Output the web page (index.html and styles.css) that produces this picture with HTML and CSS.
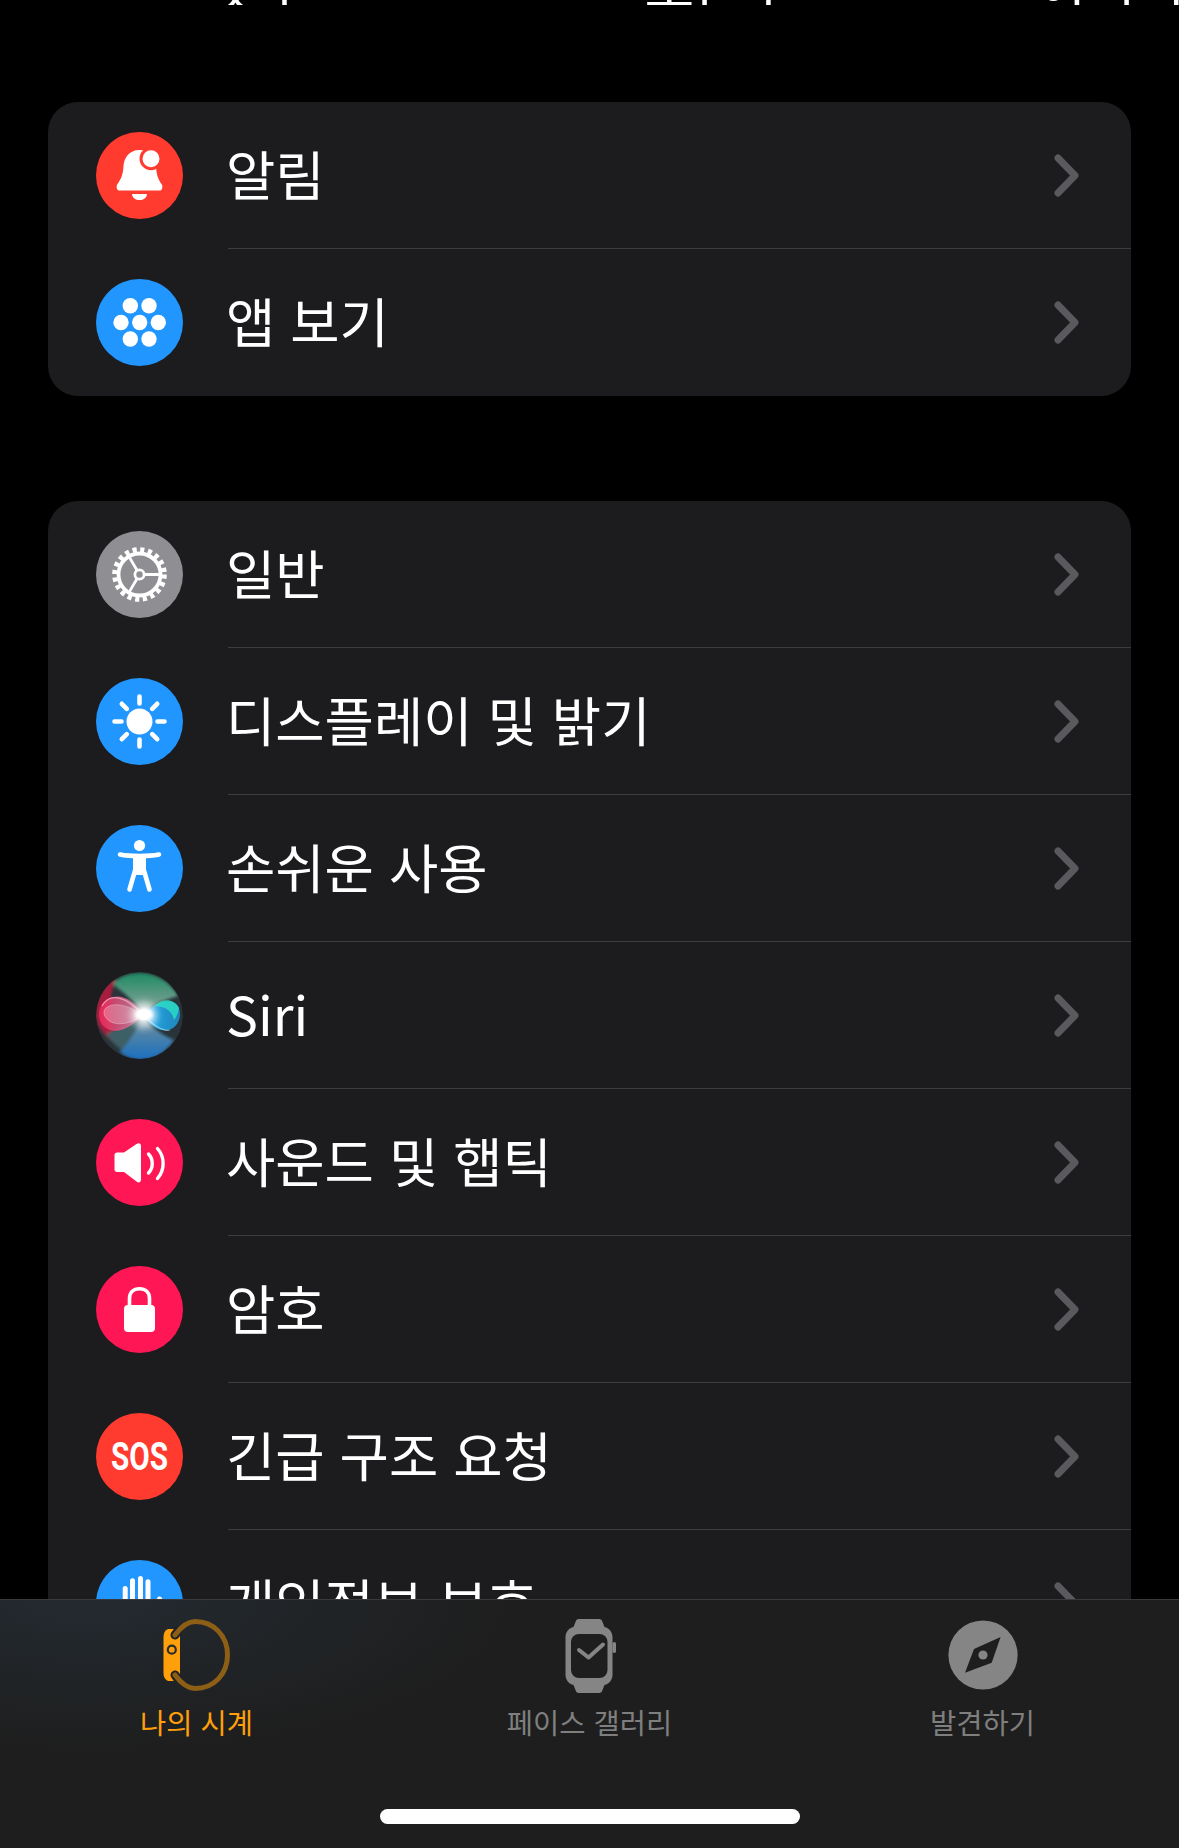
FILE: index.html
```html
<!DOCTYPE html>
<html lang="ko">
<head>
    <meta charset="UTF-8">
    <meta name="viewport" content="width=device-width, initial-scale=1.0">
    <title>나의 시계</title>
    <link rel="stylesheet" href="styles.css">
</head>
<body>
    <div class="screen">
        <div class="content">
            <div class="clipped-row">
                <span class="clipped-a">맞추</span>
                <span class="clipped-b">모든수</span>
                <span class="clipped-c">이러리</span>
            </div>

            <div class="card card-first">
                <div class="row">
                    <svg class="icon" viewBox="0 0 87 87">
                        <circle cx="43.5" cy="43.5" r="43.5" fill="#ff3b30"/>
                        <path fill="#fff" d="M43.5 18C33 18 28 26 27.5 34C27 43 25 47 21.5 52C20 54 20.5 58.5 23 58.5H64C66.5 58.5 67 54 65.5 52C62 47 60.5 43 60 34C59.5 26 54 18 43.5 18Z"/>
                        <path fill="#fff" d="M36 62H51C50.5 66 47.5 68 43.5 68C39.5 68 36.5 66 36 62Z"/>
                        <circle cx="55" cy="26.7" r="11.5" fill="#ff3b30"/>
                        <circle cx="55" cy="26.7" r="8.5" fill="#fff"/>
                    </svg>
                    <span class="label">알림</span>
                    <svg class="chevron" viewBox="0 0 30 46"><path d="M5 5L22 22.5L5 40"/></svg>
                </div>
                <div class="row">
                    <svg class="icon" viewBox="0 0 87 87">
                        <circle cx="43.5" cy="43.5" r="43.5" fill="#2196ff"/>
                        <g fill="#fff">
                            <circle cx="34.3" cy="26.7" r="7.7"/><circle cx="53" cy="26.7" r="7.7"/>
                            <circle cx="25" cy="43.5" r="7.7"/><circle cx="43.7" cy="43.5" r="7.7"/><circle cx="62.3" cy="43.5" r="7.7"/>
                            <circle cx="34.3" cy="60" r="7.7"/><circle cx="53" cy="60" r="7.7"/>
                        </g>
                    </svg>
                    <span class="label">앱 보기</span>
                    <svg class="chevron" viewBox="0 0 30 46"><path d="M5 5L22 22.5L5 40"/></svg>
                </div>
            </div>

            <div class="card">
                <div class="row">
                    <svg class="icon" viewBox="0 0 87 87">
                        <circle cx="43.5" cy="43.5" r="43.5" fill="#8e8e93"/>
                        <g fill="none" stroke="#fff">
                            <circle cx="43.5" cy="43.5" r="24.8" stroke-width="5" stroke-dasharray="4.2 3.59"/>
                            <circle cx="43.5" cy="43.5" r="21" stroke-width="3.8"/>
                            <circle cx="43.5" cy="43.5" r="4.6" stroke-width="2.8"/>
                            <path stroke-width="2.8" d="M48.5 43.5H64M41 39.2L33 25.6M41 47.8L33 61.4"/>
                        </g>
                    </svg>
                    <span class="label">일반</span>
                    <svg class="chevron" viewBox="0 0 30 46"><path d="M5 5L22 22.5L5 40"/></svg>
                </div>
                <div class="row">
                    <svg class="icon" viewBox="0 0 87 87">
                        <circle cx="43.5" cy="43.5" r="43.5" fill="#2196ff"/>
                        <circle cx="43.5" cy="43.5" r="13" fill="#fff"/>
                        <path fill="none" stroke="#fff" stroke-width="4.6" stroke-linecap="round" d="M43.5 18.5V25.5M43.5 61.5V68.5M18.5 43.5H25.5M61.5 43.5H68.5M25.8 25.8L30.8 30.8M56.2 56.2L61.2 61.2M25.8 61.2L30.8 56.2M56.2 30.8L61.2 25.8"/>
                    </svg>
                    <span class="label">디스플레이 및 밝기</span>
                    <svg class="chevron" viewBox="0 0 30 46"><path d="M5 5L22 22.5L5 40"/></svg>
                </div>
                <div class="row">
                    <svg class="icon" viewBox="0 0 87 87">
                        <circle cx="43.5" cy="43.5" r="43.5" fill="#2196ff"/>
                        <circle cx="43.5" cy="20.5" r="5.6" fill="#fff"/>
                        <path fill="#fff" d="M37 31.5H50V46L47 50H40L37 46Z"/>
                        <path fill="none" stroke="#fff" stroke-width="4.6" stroke-linecap="round" d="M24 29.5C34 31.5 53 31.5 63 29.5M39.5 44L33.5 64.5M47.5 44L53.5 64.5"/>
                    </svg>
                    <span class="label">손쉬운 사용</span>
                    <svg class="chevron" viewBox="0 0 30 46"><path d="M5 5L22 22.5L5 40"/></svg>
                </div>
                <div class="row">
                    <svg class="icon" viewBox="0 0 87 87">
                        <defs>
                            <clipPath id="siri-clip"><circle cx="43.5" cy="43.5" r="43.5"/></clipPath>
                            <filter id="siri-blur" x="-30%" y="-30%" width="160%" height="160%"><feGaussianBlur stdDeviation="1.6"/></filter>
                            <filter id="siri-glow" x="-100%" y="-100%" width="300%" height="300%"><feGaussianBlur stdDeviation="3.5"/></filter>
                            <linearGradient id="siri-green" x1="0" y1="0" x2="0" y2="1">
                                <stop offset="0" stop-color="#1f8a63"/>
                                <stop offset="1" stop-color="#8fa6a0"/>
                            </linearGradient>
                            <linearGradient id="siri-blue" x1="0" y1="1" x2="0" y2="0">
                                <stop offset="0" stop-color="#1a6fc0"/>
                                <stop offset="1" stop-color="#6f8f98"/>
                            </linearGradient>
                            <linearGradient id="siri-pink" x1="0" y1="0" x2="1" y2="0">
                                <stop offset="0" stop-color="#f02a5c"/>
                                <stop offset="1" stop-color="#c98aa8"/>
                            </linearGradient>
                            <linearGradient id="siri-cyan" x1="0" y1="0" x2="1" y2="0">
                                <stop offset="0" stop-color="#1fb7ff"/>
                                <stop offset="1" stop-color="#1f8fc8"/>
                            </linearGradient>
                        </defs>
                        <g clip-path="url(#siri-clip)">
                            <circle cx="43.5" cy="43.5" r="43.5" fill="#28343a"/>
                            <g filter="url(#siri-blur)">
                                <path fill="url(#siri-green)" d="M16 12C32 -4 66 -4 82 24C66 28 54 36 48 42C38 30 28 20 16 12Z"/>
                                <path fill="#a81f3c" d="M0 42C0 26 6 14 20 5C14 22 10 46 22 74C8 64 0 54 0 42Z"/>
                                <path fill="url(#siri-blue)" d="M24 80C30 64 40 52 48 46C56 56 68 64 78 68C62 92 38 92 24 80Z"/>
                                <path fill="#3d5f66" d="M10 62C20 58 36 50 47 44C42 56 34 68 26 78C20 74 14 68 10 62Z"/>
                            </g>
                            <path fill="url(#siri-pink)" fill-opacity=".85" d="M4 36C10 22 26 22 36 30C42 34 46 40 47 43C38 52 26 62 14 58C5 55 1 46 4 36Z"/>
                            <path fill="#f4c4d4" fill-opacity=".35" stroke="#fff" stroke-opacity=".3" d="M10 36C20 28 36 36 47 43C38 50 22 56 12 48C7 44 7 38 10 36Z"/>
                            <path fill="none" stroke="#f7b6cc" stroke-opacity=".7" stroke-width="1.4" d="M6 34C14 20 30 24 47 43"/>
                            <path fill="url(#siri-cyan)" fill-opacity=".9" d="M47 43C56 32 74 24 82 34C87 44 82 56 72 58C60 60 52 50 47 43Z"/>
                            <path fill="#2de0c4" fill-opacity=".8" d="M58 34C66 26 78 26 83 36C82 42 80 46 78 48C76 38 68 34 58 34Z"/>
                            <path fill="none" stroke="#c8f5ff" stroke-opacity=".55" stroke-width="1.2" d="M47 43C56 52 66 60 74 58"/>
                            <circle cx="48" cy="43" r="13" fill="#fff" fill-opacity=".7" filter="url(#siri-glow)"/>
                            <ellipse cx="48" cy="42.5" rx="9" ry="6.5" fill="#fff" filter="url(#siri-blur)"/>
                            <circle cx="48" cy="42.5" r="5.5" fill="#fff"/>
                        </g>
                    </svg>
                    <span class="label">Siri</span>
                    <svg class="chevron" viewBox="0 0 30 46"><path d="M5 5L22 22.5L5 40"/></svg>
                </div>
                <div class="row">
                    <svg class="icon" viewBox="0 0 87 87">
                        <circle cx="43.5" cy="43.5" r="43.5" fill="#ff1654"/>
                        <path fill="#fff" d="M18.5 36C18.5 34.5 19.5 33.5 21 33.5H28L40.5 25C43 23.5 45 24.5 45 27V60.5C45 63 43 64.5 40.5 62.5L28 53H21C19.5 53 18.5 52 18.5 50.5Z"/>
                        <path fill="none" stroke="#fff" stroke-width="3.4" stroke-linecap="round" d="M52.5 35C57.5 40 57.5 49 52.5 54M61.5 29.5C69 38 69 51 61.5 59.5"/>
                    </svg>
                    <span class="label">사운드 및 햅틱</span>
                    <svg class="chevron" viewBox="0 0 30 46"><path d="M5 5L22 22.5L5 40"/></svg>
                </div>
                <div class="row">
                    <svg class="icon" viewBox="0 0 87 87">
                        <circle cx="43.5" cy="43.5" r="43.5" fill="#ff1654"/>
                        <rect x="28" y="39" width="31" height="27" rx="4" fill="#fff"/>
                        <path fill="none" stroke="#fff" stroke-width="3.6" d="M33.5 41V32.5C33.5 26.5 37.5 22.8 43.5 22.8C49.5 22.8 53.5 26.5 53.5 32.5V41"/>
                    </svg>
                    <span class="label">암호</span>
                    <svg class="chevron" viewBox="0 0 30 46"><path d="M5 5L22 22.5L5 40"/></svg>
                </div>
                <div class="row">
                    <svg class="icon" viewBox="0 0 87 87">
                        <circle cx="43.5" cy="43.5" r="43.5" fill="#ff3b30"/>
                        <text class="sos" x="15" y="57" textLength="57" lengthAdjust="spacingAndGlyphs">SOS</text>
                    </svg>
                    <span class="label">긴급 구조 요청</span>
                    <svg class="chevron" viewBox="0 0 30 46"><path d="M5 5L22 22.5L5 40"/></svg>
                </div>
                <div class="row">
                    <svg class="icon" viewBox="0 0 87 87">
                        <circle cx="43.5" cy="43.5" r="43.5" fill="#2196ff"/>
                        <path fill="none" stroke="#fff" stroke-width="5" stroke-linecap="round" d="M29.2 28.5V62M36.5 20.8V60M44.5 18.5V60M52 21.8V60M63.5 39L57 52"/>
                    </svg>
                    <span class="label">개인정보 보호</span>
                    <svg class="chevron" viewBox="0 0 30 46"><path d="M5 5L22 22.5L5 40"/></svg>
                </div>
            </div>
        </div>

        <div class="tabbar">
            <div class="tab tab-active">
                <svg class="tab-icon" viewBox="0 0 80 80">
                    <path fill="#ff9f0a" d="M11 14H23V66H11Q6.5 64 6.5 58V22Q6.5 16 11 14Z"/>
                    <path fill="none" stroke="#1e2226" stroke-width="9" stroke-linecap="round" d="M18 20L21 16M18 60L21 64"/>
                    <path fill="none" stroke="#8c5e16" stroke-width="5" stroke-linecap="round" d="M18 20C24 12 31 6.5 38 6.5C57 6.5 70.5 21 70.5 40C70.5 59 57 73.5 38 73.5C31 73.5 24 68 18 60"/>
                    <circle cx="14.8" cy="34.7" r="4" fill="none" stroke="#2a2a2a" stroke-width="2.2"/>
                </svg>
                <span class="tab-label">나의 시계</span>
            </div>
            <div class="tab">
                <svg class="tab-icon" viewBox="0 0 80 80">
                    <path fill="#858585" d="M29 4H49C51 4 52 5 52.5 7L54.5 12C59 13 62.5 17 62.5 22V60C62.5 65 59 69 54.5 70L52.5 75C52 77 51 78 49 78H29C27 78 26 77 25.5 75L23.5 70C19 69 15.5 65 15.5 60V22C15.5 17 19 13 23.5 12L25.5 7C26 5 27 4 29 4Z"/>
                    <rect x="62.5" y="27" width="3.5" height="11" rx="1.7" fill="#858585"/>
                    <rect x="21" y="19" width="36.5" height="44" rx="8" fill="#1e1e1e"/>
                    <path fill="none" stroke="#858585" stroke-width="4" stroke-linecap="round" stroke-linejoin="round" d="M29 35L38.5 42.5L53 29.5"/>
                </svg>
                <span class="tab-label">페이스 갤러리</span>
            </div>
            <div class="tab">
                <svg class="tab-icon" viewBox="0 0 80 80">
                    <circle cx="40" cy="40" r="34.6" fill="#858585"/>
                    <path fill="#1e1e1e" d="M57.6 22L48.7 47.7L22 57.7L31 34Z"/>
                    <circle cx="40" cy="40" r="4.6" fill="#858585"/>
                </svg>
                <span class="tab-label">발견하기</span>
            </div>
            <div class="home-indicator"></div>
        </div>
    </div>
</body>
</html>
```

FILE: styles.css
```css
* {
    box-sizing: border-box;
}

body {
    margin: 0;
    background-color: #000;
    font-family: "Noto Sans CJK KR", "Noto Sans", sans-serif;
    color: #fff;
}

.screen {
    width: 1179px;
    height: 1848px;
    display: flex;
    flex-direction: column;
    overflow: hidden;
}

.content {
    flex: 1;
    min-height: 0;
    overflow: hidden;
}

.clipped-row {
    height: 5px;
    display: flex;
    align-items: flex-end;
    overflow: hidden;
    font-size: 54px;
    line-height: 1;
    white-space: nowrap;
}

.clipped-row span {
    display: block;
    height: 54px;
    margin-bottom: -7px;
    flex: none;
}

.clipped-a {
    margin-left: 210px;
}

.clipped-b {
    margin-left: 335px;
}

.clipped-c {
    margin-left: 243px;
}

.card {
    margin: 0 48px;
    margin-top: 105px;
    background-color: #1c1c1e;
    border-radius: 30px;
}

.card-first {
    margin-top: 97px;
}

.row {
    position: relative;
    height: 147px;
    display: flex;
    align-items: center;
    padding: 0 52px 0 48px;
}

.row::after {
    content: "";
    position: absolute;
    left: 180px;
    right: 0;
    bottom: 0;
    height: 1px;
    background-color: #3d3d40;
}

.row:last-child::after {
    display: none;
}

.icon {
    width: 87px;
    height: 87px;
    flex: none;
    margin-right: 43px;
}

.sos {
    font-family: Roboto, sans-serif;
    font-weight: 700;
    font-size: 38px;
    fill: #fff;
}

.label {
    flex: 1;
    font-size: 53.6px;
    line-height: 1.2;
    padding-bottom: 5px;
    white-space: nowrap;
}

.chevron {
    width: 30px;
    height: 46px;
    flex: none;
    margin-right: -4px;
    fill: none;
    stroke: #5a5a5e;
    stroke-width: 7;
    stroke-linecap: round;
    stroke-linejoin: round;
}

.tabbar {
    position: relative;
    height: 249px;
    flex: none;
    display: flex;
    align-items: flex-start;
    border-top: 1px solid #3a3a3c;
    background: radial-gradient(ellipse 420px 150px at 90px 0, #232a30, #1e1e1e 100%);
}

.tab {
    width: 393px;
    display: flex;
    flex-direction: column;
    align-items: center;
    padding-top: 15px;
    color: #7f7f7f;
}

.tab-active {
    color: #ff9f0a;
}

.tab-icon {
    width: 80px;
    height: 80px;
}

.tab-label {
    font-size: 28.5px;
    line-height: 34px;
    margin-top: 10px;
    white-space: nowrap;
}

.home-indicator {
    position: absolute;
    left: 380px;
    bottom: 24px;
    width: 420px;
    height: 15px;
    border-radius: 8px;
    background-color: #fff;
}
```
